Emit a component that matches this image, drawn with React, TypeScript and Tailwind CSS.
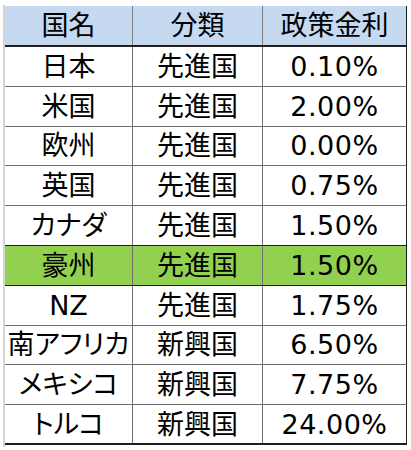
const rows = [
  { name: "日本", type: "先進国", rate: "0.10%" },
  { name: "米国", type: "先進国", rate: "2.00%" },
  { name: "欧州", type: "先進国", rate: "0.00%" },
  { name: "英国", type: "先進国", rate: "0.75%" },
  { name: "カナダ", type: "先進国", rate: "1.50%" },
  { name: "豪州", type: "先進国", rate: "1.50%", highlight: true },
  { name: "NZ", type: "先進国", rate: "1.75%" },
  { name: "南アフリカ", type: "新興国", rate: "6.50%" },
  { name: "メキシコ", type: "新興国", rate: "7.75%" },
  { name: "トルコ", type: "新興国", rate: "24.00%" },
];

export default function App() {
  return (
    <div
      className="w-[411px] h-[450px] bg-white pt-[5px] pl-[3px] text-black [font-feature-settings:'palt']"
      style={{ fontFamily: '"DejaVu Sans", "Noto Sans CJK JP", sans-serif' }}
    >
      <div className="w-[404px] h-[442px] border-l-2 border-[#d4d4d4]">
        <div className="pt-[1px]">
          {/* Header */}
          <div className="flex h-[41px] bg-[#c5d9f1] border-b-2 border-[#1f1f1f] text-[27px] leading-none">
            <div className="w-[128px] flex items-center justify-center border-r border-[#7f7f7f]">国名</div>
            <div className="w-[130px] flex items-center justify-center border-r border-[#7f7f7f]">分類</div>
            <div className="w-[144px] flex items-center justify-center border-r border-[#1f1f1f]">政策金利</div>
          </div>

          {/* Body */}
          {rows.map((r, i) => (
            <div
              key={r.name}
              className={
                "flex h-[39.8px] text-[27px] leading-none " +
                (r.highlight ? "bg-[#92d050] " : "bg-white ") +
                (i === rows.length - 1
                  ? "border-b-2 border-[#1f1f1f]"
                  : rows[i + 1]?.highlight || r.highlight
                  ? "border-b border-[#1f1f1f]"
                  : "border-b border-[#6f6f6f]")
              }
            >
              <div className="w-[128px] flex items-center justify-center whitespace-nowrap border-r border-[#6f6f6f]">{r.name}</div>
              <div className="w-[130px] flex items-center justify-center border-r border-[#6f6f6f]">{r.type}</div>
              <div className="w-[144px] flex items-center justify-center border-r border-[#1f1f1f] tracking-[0.5px]">{r.rate}</div>
            </div>
          ))}
        </div>
      </div>
    </div>
  );
}
